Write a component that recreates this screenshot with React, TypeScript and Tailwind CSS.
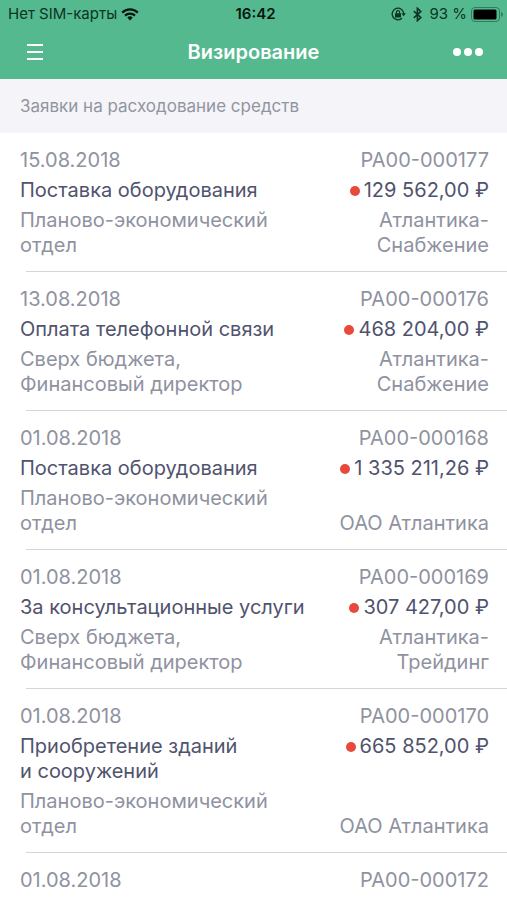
import React from "react";

type Request = {
  id: string;
  date: string;
  title?: string;
  amount?: string;
  department?: string;
  company?: string;
};

const requests: Request[] = [
  {
    id: "РА00-000177",
    date: "15.08.2018",
    title: "Поставка оборудования",
    amount: "129 562,00 ₽",
    department: "Планово-экономический отдел",
    company: "Атлантика-Снабжение",
  },
  {
    id: "РА00-000176",
    date: "13.08.2018",
    title: "Оплата телефонной связи",
    amount: "468 204,00 ₽",
    department: "Сверх бюджета, Финансовый\u00a0директор",
    company: "Атлантика-Снабжение",
  },
  {
    id: "РА00-000168",
    date: "01.08.2018",
    title: "Поставка оборудования",
    amount: "1 335 211,26 ₽",
    department: "Планово-экономический отдел",
    company: "ОАО Атлантика",
  },
  {
    id: "РА00-000169",
    date: "01.08.2018",
    title: "За консультационные услуги",
    amount: "307 427,00 ₽",
    department: "Сверх бюджета, Финансовый\u00a0директор",
    company: "Атлантика-Трейдинг",
  },
  {
    id: "РА00-000170",
    date: "01.08.2018",
    title: "Приобретение зданий и\u00a0сооружений",
    amount: "665 852,00 ₽",
    department: "Планово-экономический отдел",
    company: "ОАО Атлантика",
  },
  { id: "РА00-000172", date: "01.08.2018" },
];

const WifiIcon = () => (
  <svg width="18" height="13" viewBox="0 0 18 13" fill="none" stroke="#06150f" strokeWidth="2.2">
    <path d="M1.2 4.6a11 11 0 0 1 15.6 0" />
    <path d="M4 7.6a7.1 7.1 0 0 1 10 0" />
    <path d="M6.3 9.5a3.9 3.9 0 0 1 5.4 0L9 12.4z" fill="#06150f" stroke="none" />
  </svg>
);

const RotationLockIcon = () => (
  <svg width="15" height="14" viewBox="0 0 15 14" fill="none" stroke="#0d3324">
    <path d="M11 11.200A5.800 5.800 0 1 1 12.800 7" strokeWidth="1.300" />
    <path d="M10.400 6.300h4.400l-2.200 2.900z" fill="#0d3324" stroke="none" />
    <rect x="4" y="6.200" width="6" height="4.200" rx="0.500" fill="#0d3324" stroke="none" />
    <path d="M5.400 6.400V5.200a1.600 1.600 0 0 1 3.200 0v1.200" strokeWidth="1.200" />
  </svg>
);

const BluetoothIcon = () => (
  <svg width="9" height="15" viewBox="0 0 9 15" fill="none" stroke="#0d3324" strokeWidth="1.600">
    <path d="M0.8 4.1l7 6.4-3.4 3.2V1.3l3.4 3.2-7 6.4" />
  </svg>
);

const BatteryIcon = () => (
  <svg width="32" height="15" viewBox="0 0 32 15">
    <rect x="0.5" y="0.5" width="28" height="14" rx="3.5" fill="none" stroke="#2f7d5c" />
    <rect x="2.5" y="2.5" width="23" height="10" rx="1.5" fill="#000" />
    <path d="M30 5v5c1.2-.4 1.8-1.3 1.8-2.5S31.2 5.4 30 5z" fill="#2f7d5c" />
  </svg>
);

const StatusBar = () => (
  <div className="grid grid-cols-[1fr_auto_1fr] items-center h-7 pl-2 pr-1 text-[15px] text-[#0d3324]">
    <div className="flex items-center gap-1 whitespace-nowrap">
      <span>Нет SIM-карты</span>
      <WifiIcon />
    </div>
    <span className="font-semibold text-[#06150f]">16:42</span>
    <div className="flex items-center justify-end gap-[7px] whitespace-nowrap">
      <RotationLockIcon />
      <BluetoothIcon />
      <div className="flex items-center gap-1">
        <span>93 %</span>
        <BatteryIcon />
      </div>
    </div>
  </div>
);

const NavBar = () => (
  <div className="grid grid-cols-[1fr_auto_1fr] items-center h-[51px] px-6 pb-1 text-white">
    <button aria-label="Меню" className="justify-self-start">
      <svg width="21" height="18" viewBox="0 0 21 18" stroke="#fff" strokeWidth="2">
        <path d="M3 2h16M3 9h16M3 16h16" />
      </svg>
    </button>
    <h1 className="text-xl font-semibold">Визирование</h1>
    <button aria-label="Ещё" className="justify-self-end">
      <svg width="30" height="8" viewBox="0 0 30 8" fill="#fff">
        <circle cx="4" cy="4" r="4" />
        <circle cx="15" cy="4" r="4" />
        <circle cx="26" cy="4" r="4" />
      </svg>
    </button>
  </div>
);

const RequestRow = ({ request }: { request: Request }) => {
  const { id, date, title, amount, department, company } = request;

  return (
    <li>
      <div className="grid grid-cols-[5fr_3fr] gap-y-[5px] pl-5 pr-[18px] pt-[15px] pb-[13px] text-xl leading-[25px] text-[#8f92a0]">
        <span>{date}</span>
        <span className="text-right">{id}</span>
        {title && (
          <>
            <span className="text-[#50536d]">{title}</span>
            <span className="flex items-center justify-end gap-1 h-[25px] whitespace-nowrap text-[#50536d]">
              <i className="w-[10px] h-[10px] rounded-full bg-[#e8493a]" />
              {amount}
            </span>
            <span>{department}</span>
            <span className="self-end text-right">{company}</span>
          </>
        )}
      </div>
      <div className="ml-[26px] h-px bg-[#d3d4d6]" />
    </li>
  );
};

export default function App() {
  return (
    <div className="h-screen flex flex-col overflow-hidden bg-white font-['Inter','Liberation_Sans',sans-serif]">
      <header className="shrink-0 bg-[#54b98f]">
        <StatusBar />
        <NavBar />
      </header>
      <h2 className="shrink-0 px-5 py-[15px] bg-[#f4f4f9] text-[17px] leading-6 text-[#9294a0]">
        Заявки на расходование средств
      </h2>
      <ul className="flex-1 overflow-hidden">
        {requests.map((request) => (
          <RequestRow key={request.id} request={request} />
        ))}
      </ul>
    </div>
  );
}
